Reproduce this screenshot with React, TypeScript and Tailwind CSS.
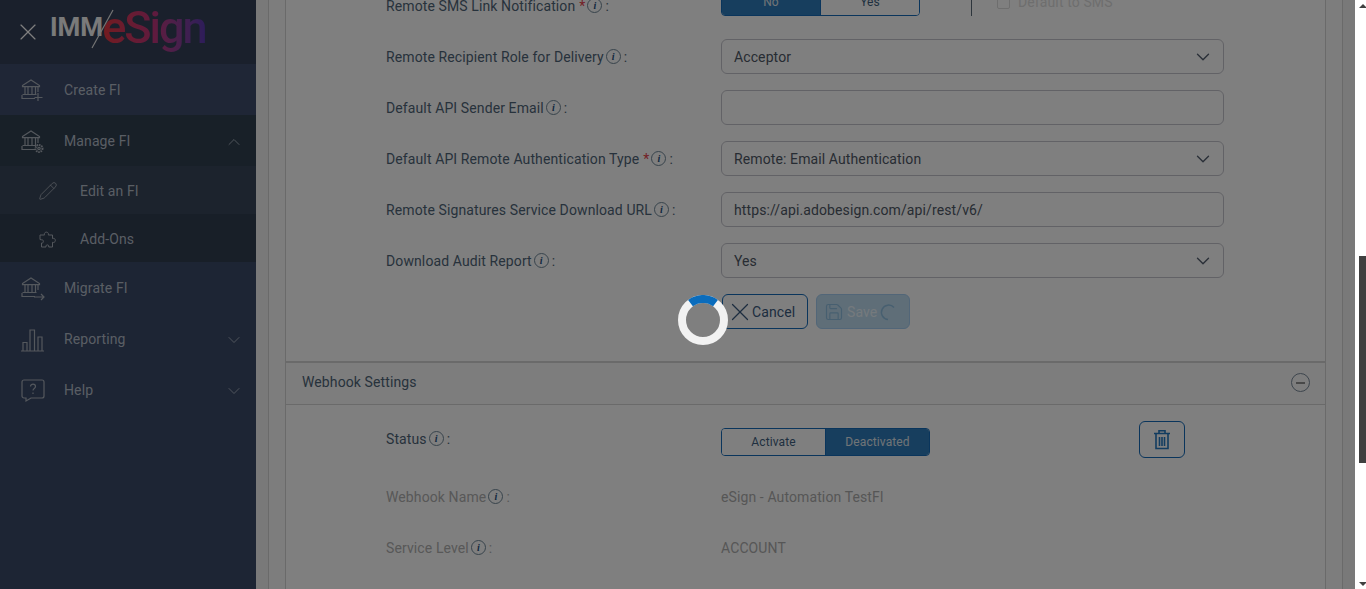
import { ReactNode } from "react";
import { ChevronDown, ChevronUp, Pencil, Save, X } from "lucide-react";

function BankIcon({ children }: { children?: ReactNode }) {
  return (
    <svg width="26" height="26" viewBox="0 0 26 26" fill="none" stroke="currentColor" strokeWidth="1.2">
      <path d="M2.5 7.5 11 2l8.5 5.5v1.2h-17z" />
      <path d="M5 9v7M8 9v7M12 9v7M15.500 9v7M18 9v5" />
      <path d="M2.500 16.500h14M2 17v3.500h13" />
      {children}
    </svg>
  );
}

function ChatIcon() {
  return (
    <svg width="26" height="26" viewBox="0 0 26 26" fill="none" stroke="currentColor" strokeWidth="1.2">
      <path d="M4 2h18a2 2 0 0 1 2 2v14a2 2 0 0 1-2 2H11l-5 3v-3H4a2 2 0 0 1-2-2V4a2 2 0 0 1 2-2z" />
      <path d="M10.500 8.500c0-3.300 5-3.300 5 0 0 2-2.500 2-2.500 4M13 14.500v1.500" />
    </svg>
  );
}

function BarsIcon() {
  return (
    <svg width="26" height="26" viewBox="0 0 26 26" fill="none" stroke="currentColor" strokeWidth="1.2">
      <path d="M1 24h23M3 23.500v-8h4v8M10 23.500V3h4.500v20.500M18 23.500V10h4v13.500" />
    </svg>
  );
}

function PuzzleIcon() {
  return (
    <svg width="20" height="20" viewBox="0 0 20 20" fill="none" stroke="currentColor" strokeWidth="1">
      <path d="M2 6h4.500c-1.200-3.800 5-3.800 3.800 0H14.500v3.500c3.800-1.200 3.800 5 0 3.800V18h-3.800c1-2.800-3.700-2.800-2.700 0H3.500v-4c2.500.8 2.500-4-.2-3.200L2 10.500z" />
    </svg>
  );
}

function TrashIcon() {
  return (
    <svg width="18" height="22" viewBox="0 0 18 22" fill="none" stroke="currentColor" strokeWidth="1.6">
      <path d="M1 4.500h16M6 4V1.800h6V4" />
      <path d="M3 5v14.500h12V5" />
      <path d="M6.500 8v9M9 8v9M11.500 8v9" />
    </svg>
  );
}

type NavItemProps = {
  icon: ReactNode;
  label: string;
  className: string;
  sub?: boolean;
  chevron?: "up" | "down";
};

function NavItem({ icon, label, className, sub, chevron }: NavItemProps) {
  return (
    <div className={`flex items-center pt-[2px] text-[14px] tracking-[0.11px] text-[#b4bdc9] ${className}`}>
      <div className={sub ? "ml-[38px] w-[42px] text-[#a9b0ba]" : "ml-[20px] w-[44px] text-[#a9b0ba]"}>{icon}</div>
      <span>{label}</span>
      {chevron === "up" && <ChevronUp size={20} strokeWidth={1} className="ml-auto mr-[12px]" />}
      {chevron === "down" && <ChevronDown size={20} strokeWidth={1} className="ml-auto mr-[12px]" />}
    </div>
  );
}

function Sidebar() {
  return (
    <div className="w-64 shrink-0 bg-[#3a4a68]">
      <div className="flex h-16 items-center bg-[#344158]">
        <X size={28} strokeWidth={1} className="ml-[14px] text-white" />
        <div className="relative ml-[8px] flex h-16 items-center">
          <span className="-mt-[11px] text-[26px] font-bold leading-none text-[#f4f4f4]">IMM</span>
          <svg width="24" height="42" viewBox="0 0 24 42" className="absolute left-[41px] top-[9px]" fill="none" stroke="#e8e8e8" strokeWidth="1.2">
            <path d="M1 39 22 1" />
          </svg>
          <span className="-ml-[1px] bg-gradient-to-r from-[#e6363c] via-[#c0357c] to-[#5a38b4] bg-clip-text pb-[10px] pt-[2px] text-[45px] font-medium leading-[50px] tracking-[-2px] text-transparent">
            eSign
          </span>
        </div>
      </div>
      <NavItem className="h-[51px] bg-[#3e4c6c]" label="Create FI" icon={<BankIcon><path d="M18 15v8M14.500 19.500h8" /></BankIcon>} />
      <NavItem className="h-[51px] bg-[#304050]" label="Manage FI" chevron="up" icon={
        <BankIcon>
          <circle cx="19" cy="19.500" r="3.500" strokeWidth="2" strokeDasharray="1.500 0.800" />
          <circle cx="19" cy="19.500" r="1.200" />
        </BankIcon>
      } />
      <NavItem className="h-12 bg-[#38465a]" sub label="Edit an FI" icon={<Pencil size={20} strokeWidth={1} />} />
      <NavItem className="h-12 bg-[#303e50]" sub label="Add-Ons" icon={<PuzzleIcon />} />
      <NavItem className="h-[51px]" label="Migrate FI" icon={<BankIcon><path d="M14 21h10M21 18l3 3-3 3" /></BankIcon>} />
      <NavItem className="h-[51px]" label="Reporting" chevron="down" icon={<BarsIcon />} />
      <NavItem className="h-[51px]" label="Help" chevron="down" icon={<ChatIcon />} />
    </div>
  );
}

function InfoDot() {
  return (
    <span className="mx-[2px] -mt-[3px] inline-flex h-[15px] w-[15px] items-center justify-center rounded-full border border-[#6f8798] align-middle font-['Liberation_Serif',serif] text-[10px] font-bold italic leading-none text-[#1f4f80]">
      i
    </span>
  );
}

function Label({ text, required, muted }: { text: string; required?: boolean; muted?: boolean }) {
  return (
    <div className={muted ? "text-[#b0b0b0]" : "text-[#4f6578]"}>
      {text}
      {required && <span className="ml-[4px] text-[#e8424c]">*</span>}
      <InfoDot />
      <span className="ml-[1px]">:</span>
    </div>
  );
}

function FormRow({ label, required, children }: { label: string; required?: boolean; children: ReactNode }) {
  return (
    <div className="grid h-[51px] grid-cols-[335px_503px] items-center pl-[100px]">
      <Label text={label} required={required} />
      {children}
    </div>
  );
}

function SelectBox({ value }: { value: string }) {
  return (
    <div className="mb-[2px] flex h-[35px] items-center justify-between rounded-md border border-[#c4c4cc] bg-white pl-3 pr-[9px] text-[#4f5866]">
      <span className="pt-[1px]">{value}</span>
      <ChevronDown size={22} strokeWidth={1.5} className="text-[#555f70]" />
    </div>
  );
}

function TextBox({ value }: { value?: string }) {
  return (
    <div className="mb-[2px] flex h-[35px] items-center rounded-md border border-[#c4c4cc] bg-white pl-3 pt-[1px] text-[#4f5866]">
      {value}
    </div>
  );
}

function Toggle({ left, right, activeLeft, leftW, rightW }: { left: string; right: string; activeLeft?: boolean; leftW: string; rightW: string }) {
  const on = "bg-[#2e7cbc] text-[#e0e8ee]";
  const off = "bg-white text-[#3f5f80]";
  return (
    <div className="flex h-7 overflow-hidden rounded-[4px] border border-[#146ab8] text-[12px]">
      <div className={`flex items-center justify-center border-r border-[#146ab8] ${leftW} ${activeLeft ? on : off}`}>{left}</div>
      <div className={`flex items-center justify-center ${rightW} ${activeLeft ? off : on}`}>{right}</div>
    </div>
  );
}

function SpinnerRing() {
  return (
    <svg width="50" height="50" viewBox="0 0 50 50" fill="none" className="absolute left-[678px] top-[295px]">
      <circle cx="25" cy="25" r="21" stroke="#f2f2f2" strokeWidth="8" />
      <path d="M12.500 8.100a21 21 0 0 1 25 0" stroke="#0a6cbc" strokeWidth="8" />
    </svg>
  );
}

function MainContent() {
  return (
    <div className="min-w-0 flex-1 overflow-hidden bg-[#f2f2f2] px-3">
      <div className="-mt-[19px] h-[700px] border-x border-[#d4d4d4] bg-[#fbfbfb] px-4">
        <div className="h-full border-x border-[#d4d4d4] bg-white text-[14px] tracking-[0.11px]">
          <div className="grid h-[51px] grid-cols-[335px_503px] items-center pl-[100px]">
            <Label text="Remote SMS Link Notification" required />
            <div className="flex items-center">
              <div className="mb-[9px] w-[199px]">
                <Toggle left="No" right="Yes" activeLeft leftW="w-[99px]" rightW="flex-1" />
              </div>
              <div className="mb-[9px] ml-[51px] h-7 w-px bg-[#5a6a78]" />
              <div className="mb-[9px] ml-[25px] flex items-center text-[#dcdcdc]">
                <span className="mr-2 h-[13px] w-[13px] rounded-[2px] border border-[#dcdcdc]" />
                Default to SMS
              </div>
            </div>
          </div>
          <FormRow label="Remote Recipient Role for Delivery"><SelectBox value="Acceptor" /></FormRow>
          <FormRow label="Default API Sender Email"><TextBox /></FormRow>
          <FormRow label="Default API Remote Authentication Type" required><SelectBox value="Remote: Email Authentication" /></FormRow>
          <FormRow label="Remote Signatures Service Download URL"><TextBox value="https://api.adobesign.com/api/rest/v6/" /></FormRow>
          <FormRow label="Download Audit Report"><SelectBox value="Yes" /></FormRow>

          <div className="mb-[23px] grid h-[51px] grid-cols-[335px_503px] items-center pl-[100px]">
            <div />
            <div className="mb-[2px] ml-[1px] flex gap-2">
              <div className="flex h-[35px] w-[86px] items-center rounded-md border border-[#146ab8] pl-[9px] text-[#3a5a80]">
                <X size={30} strokeWidth={1} className="-mx-[7px] mr-[-3px] shrink-0" />
                <span className="pt-[1px]">Cancel</span>
              </div>
              <div className="flex h-[35px] w-[94px] items-center rounded-md border border-[#a4cdf0] bg-[#bedcf0] pl-[7px]">
                <Save size={20} strokeWidth={1.4} className="mr-[3px] text-[#8fbfe0]" />
                <span className="pt-[1px] text-[#eaf4fb]">Save</span>
                <svg width="18" height="18" viewBox="0 0 18 18" fill="none" stroke="#8fbfe0" strokeWidth="1.5" className="ml-[2px]">
                  <path d="M15 4.500A7.200 7.200 0 1 0 9 16.500" />
                </svg>
              </div>
            </div>
          </div>

          <div className="flex h-[44px] items-center justify-between border-y border-[#d4d4d4] border-t-2 bg-[#fafafa] pb-[2px] pl-4 pr-[15px] text-[#4f6578]">
            <span>Webhook Settings</span>
            <span className="flex h-[19px] w-[19px] items-center justify-center rounded-full border border-[#7a8a9a]">
              <span className="h-[2px] w-[9px] bg-[#909090]" />
            </span>
          </div>

          <div className="grid h-[67px] grid-cols-[335px_503px] items-center pl-[100px]">
            <div className="mt-[2px]">
              <Label text="Status" />
            </div>
            <div className="flex items-center">
              <div className="mt-[6px] w-[209px]">
                <Toggle left="Activate" right="Deactivated" leftW="w-[104px]" rightW="flex-1" />
              </div>
              <div className="ml-[209px] mt-[2px] flex h-[37px] w-[46px] items-center justify-center rounded-md border border-[#146ab8] text-[#2478c0]">
                <TrashIcon />
              </div>
            </div>
          </div>
          <div className="grid h-[51px] grid-cols-[335px_503px] items-center pl-[100px]">
            <Label text="Webhook Name" muted />
            <div className="text-[#adadad]">eSign - Automation TestFI</div>
          </div>
          <div className="grid h-[51px] grid-cols-[335px_503px] items-center pl-[100px]">
            <Label text="Service Level" muted />
            <div className="text-[#adadad]">ACCOUNT</div>
          </div>
        </div>
      </div>
    </div>
  );
}

function Scrollbar() {
  return (
    <div className="relative flex w-[11px] shrink-0 flex-col items-center bg-white pt-[4px]">
      <div className="ml-[5px] h-0 w-0 border-x-[4px] border-b-[4px] border-x-transparent border-b-[#404040]" />
      <div className="ml-[4px] mt-[248px] h-[207px] w-[7px] bg-[#404040]" />
      <div className="ml-[5px] mt-[119px] h-0 w-0 border-x-[4px] border-t-[4px] border-x-transparent border-t-[#404040]" />
    </div>
  );
}

export default function App() {
  return (
    <div className="relative flex h-[589px] w-full overflow-hidden bg-white font-['Roboto',sans-serif]">
      <Sidebar />
      <MainContent />
      <Scrollbar />
      {/* loading overlay */}
      <div className="absolute bottom-0 left-0 right-[11px] top-0 bg-black/50" />
      <SpinnerRing />
    </div>
  );
}
